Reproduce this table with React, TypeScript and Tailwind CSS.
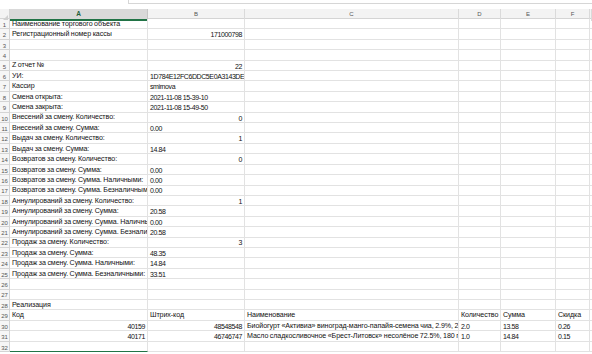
import React from "react";

type Cell = { t: string; r?: boolean } | null;

const L = (t: string): Cell => ({ t });
const R = (t: string): Cell => ({ t, r: true });

const rows: Cell[][] = [
  [L("Наименование торгового объекта")],
  [L("Регистрационный номер кассы"), R("171000798")],
  [],
  [],
  [L("Z отчет №"), R("22")],
  [L("УИ:"), L("1D784E12FC6DDC5E0A3143DE")],
  [L("Кассир"), L("smirnova")],
  [L("Смена открыта:"), L("2021-11-08 15-39-10")],
  [L("Смена закрыта:"), L("2021-11-08 15-49-50")],
  [L("Внесений за смену. Количество:"), R("0")],
  [L("Внесений за смену. Сумма:"), L("0.00")],
  [L("Выдач за смену. Количество:"), R("1")],
  [L("Выдач за смену. Сумма:"), L("14.84")],
  [L("Возвратов за смену. Количество:"), R("0")],
  [L("Возвратов за смену. Сумма:"), L("0.00")],
  [L("Возвратов за смену. Сумма. Наличными:"), L("0.00")],
  [L("Возвратов за смену. Сумма. Безналичными:"), L("0.00")],
  [L("Аннулирований за смену. Количество:"), R("1")],
  [L("Аннулирований за смену. Сумма:"), L("20.58")],
  [L("Аннулирований за смену. Сумма. Наличными:"), L("0.00")],
  [L("Аннулирований за смену. Сумма. Безналичными:"), L("20.58")],
  [L("Продаж за смену. Количество:"), R("3")],
  [L("Продаж за смену. Сумма:"), L("48.35")],
  [L("Продаж за смену. Сумма. Наличными:"), L("14.84")],
  [L("Продаж за смену. Сумма. Безналичными:"), L("33.51")],
  [],
  [],
  [L("Реализация")],
  [L("Код"), L("Штрих-код"), L("Наименование"), L("Количество"), L("Сумма"), L("Скидка")],
  [
    R("40159"),
    R("48548548"),
    L("Биойогурт «Активиа» виноград-манго-папайя-семена чиа, 2.9%, 290 г"),
    L("2.0"),
    L("13.58"),
    L("0.26"),
  ],
  [
    R("40171"),
    R("46746747"),
    L("Масло сладкосливочное «Брест-Литовск» несолёное 72.5%, 180 г"),
    L("1.0"),
    L("14.84"),
    L("0.15"),
  ],
  [],
];

const cols = ["A", "B", "C", "D", "E", "F", ""];
const grid = "grid grid-cols-[10px_138px_97px_214px_42px_55px_34px_1fr]";
const font = { fontFamily: '"Liberation Sans", Arial, sans-serif' };

const isAscii = (s: string) => /^[\x00-\x7F]*$/.test(s);

export default function App() {
  return (
    <div className="w-[592px] h-[354px] overflow-hidden bg-white text-[#111]" style={font}>
      <div className="flex h-[9px]">
        <div className="w-[128px]" />
        <div className="flex-1 h-[4px] border-l border-b border-[#d6d6d6]" />
      </div>
      <div className={`${grid} h-[10px] bg-[#f3f3f3] border-b border-[#d4d4d4]`}>
        <div className="relative border-r border-[#d4d4d4]">
          <div className="absolute right-[1px] bottom-[1px] w-0 h-0 border-l-[5px] border-l-transparent border-b-[5px] border-b-[#d0d0d0]" />
        </div>
        {cols.map((c, i) => (
          <div
            key={i}
            className={
              i === 0
                ? "flex items-center justify-center bg-[#d9d9d9] border-r border-[#c6c6c6] border-b-2 border-b-[#217346] text-[6.5px] font-bold text-[#1e5e39]"
                : "flex items-center justify-center border-r border-[#dadada] text-[6px] text-[#555]"
            }
          >
            {c}
          </div>
        ))}
      </div>
      {rows.map((row, ri) => (
        <div key={ri} className={`${grid} h-[10.42px]`}>
          <div className="flex items-end justify-center pb-[0.5px] bg-[#f6f6f6] border-r border-b border-[#d4d4d4] text-[6px] leading-none text-[#555]">
            {ri + 1}
          </div>
          {cols.map((_, ci) => {
            const cell = row[ci];
            const overflow = ri < 2 && ci === 0;
            const green = ri === 31 && ci === 0;
            const ascii = cell ? isAscii(cell.t) : false;
            return (
              <div
                key={ci}
                className={`relative flex items-end pb-[0.5px] border-r border-b whitespace-nowrap leading-none px-[2px] ${
                  ascii
                    ? "text-[7px] tracking-[-0.4px]"
                    : "text-[7.1px] tracking-[-0.08px] [word-spacing:-0.3px]"
                } ${overflow ? "overflow-visible" : "overflow-hidden"} ${
                  cell?.r ? "justify-end" : "justify-start"
                } ${green ? "border-b-[1.5px] border-b-[#217346] border-r-[#e2e2e2]" : "border-[#e2e2e2]"}`}
              >
                {cell ? <span>{cell.t}</span> : null}
              </div>
            );
          })}
        </div>
      ))}
    </div>
  );
}
